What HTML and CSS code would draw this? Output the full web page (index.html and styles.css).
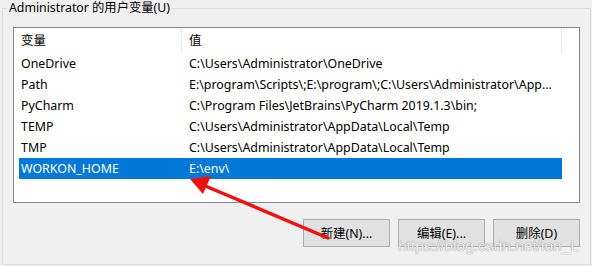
FILE: index.html
```html
<!DOCTYPE html>
<html lang="zh-CN">
<head>
  <meta charset="UTF-8" />
  <title>Administrator 的用户变量</title>
  <link rel="stylesheet" href="styles.css">
</head>
<body>
  <fieldset class="group">
    <legend>Administrator 的用户变量(U)</legend>

    <div class="list">
      <div class="list-header">
        <div class="col-name">变量</div>
        <div class="col-value">值</div>
      </div>
      <div class="row">
        <div class="col-name">OneDrive</div>
        <div class="col-value">C:\Users\Administrator\OneDrive</div>
      </div>
      <div class="row">
        <div class="col-name">Path</div>
        <div class="col-value">E:\program\Scripts\;E:\program\;C:\Users\Administrator\App...</div>
      </div>
      <div class="row">
        <div class="col-name">PyCharm</div>
        <div class="col-value">C:\Program Files\JetBrains\PyCharm 2019.1.3\bin;</div>
      </div>
      <div class="row">
        <div class="col-name">TEMP</div>
        <div class="col-value">C:\Users\Administrator\AppData\Local\Temp</div>
      </div>
      <div class="row">
        <div class="col-name">TMP</div>
        <div class="col-value">C:\Users\Administrator\AppData\Local\Temp</div>
      </div>
      <div class="row selected">
        <div class="col-name">WORKON_HOME</div>
        <div class="col-value">E:\env\</div>
      </div>
    </div>

    <div class="buttons">
      <button class="btn">新建(N)...</button>
      <button class="btn">编辑(E)...</button>
      <button class="btn">删除(D)</button>
    </div>
  </fieldset>

  <!-- annotation drawn over the screenshot -->
  <svg class="arrow" width="592" height="266" viewBox="0 0 592 266">
    <line x1="328" y1="238" x2="203" y2="185" stroke="#f01010" stroke-width="3.5" stroke-linecap="round" />
    <polygon points="190,179 211,176 203,194" fill="#f01010" />
  </svg>

  <div class="watermark">https://blog.csdn.net/ion_L</div>
</body>
</html>
```

FILE: styles.css
```css
* {
  box-sizing: border-box;
}

body {
  margin: 0;
  width: 592px;
  height: 266px;
  background: #f0f0f0;
  font-family: "Noto Sans", "Noto Sans CJK SC", sans-serif;
  font-size: 12px;
  color: #000;
  position: relative;
  overflow: hidden;
}

/* Group box */
.group {
  margin: 0 1px 0 2px;
  padding: 11px 10px 0 10px;
  height: 265px;
  border: 1px solid #dcdcdc;
}

.group legend {
  padding: 0 2px;
  margin-left: -6px;
  line-height: 16px;
  height: 16px;
  font-size: 12.3px;
}

/* List view */
.list {
  height: 176px;
  background: #fff;
  border: 1px solid #828790;
  padding: 0 17px 0 5px;
  font-size: 12.4px;
}

.list-header {
  display: flex;
  height: 25px;
  align-items: center;
}

.list-header .col-name,
.list-header .col-value {
  height: 24px;
  line-height: 24px;
  border-right: 1px solid #e5e5e5;
}

.col-name {
  width: 163px;
  padding-left: 2px;
  flex: none;
  white-space: nowrap;
}

.col-value {
  flex: 1;
  padding-left: 7px;
  white-space: nowrap;
  overflow: hidden;
}

.row {
  display: flex;
  height: 21px;
  line-height: 21px;
}

.row.selected {
  background: #0078d7;
  color: #fff;
}

/* Buttons */
.buttons {
  display: flex;
  justify-content: flex-end;
  gap: 8px;
  margin-top: 16px;
}

.btn {
  width: 87px;
  height: 28px;
  background: #e1e1e1;
  border: 1px solid #adadad;
  font-family: inherit;
  font-size: 12.4px;
  color: #000;
  padding: 0;
}

/* Overlays */
.arrow {
  position: absolute;
  top: 0;
  left: 0;
  pointer-events: none;
}

.watermark {
  position: absolute;
  left: 398px;
  top: 237px;
  font-family: "Liberation Sans", sans-serif;
  font-size: 15.5px;
  color: rgba(255, 255, 255, 0.85);
  text-shadow: 0 0 1px #9a9a9a, 0 0 1px #9a9a9a;
  pointer-events: none;
  white-space: nowrap;
}
```
